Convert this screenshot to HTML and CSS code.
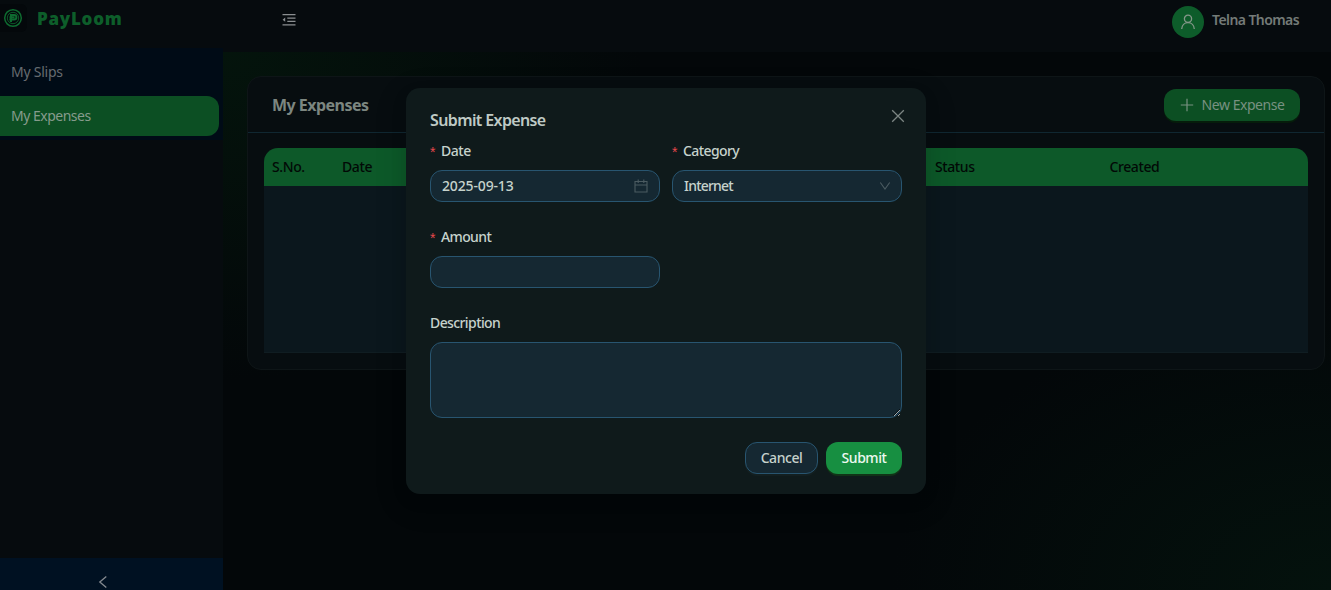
FILE: index.html
```html
<!DOCTYPE html>
<html lang="en">
<head>
<meta charset="utf-8">
<title>PayLoom</title>
<link rel="stylesheet" href="styles.css">
</head>
<body>
<div class="app">
  <aside class="sidebar">
    <div class="brand">
      <span class="logo">
        <svg width="20" height="20" viewBox="0 0 20 20" fill="none" stroke="currentColor"><circle cx="10" cy="10" r="8.3" stroke-width="1.5"/><circle cx="10" cy="10" r="5.700" stroke-width=".8"/><path d="M8 14V7h3.200a2 2 0 0 1 0 4.400H6.400M6.500 9.200h5" stroke-width="2"/></svg>
      </span>
      <span class="brand-name">PayLoom</span>
    </div>
    <nav class="menu">
      <a class="menu-item"><span class="t-slips">My Slips</span></a>
      <a class="menu-item active"><span class="t-menu">My Expenses</span></a>
    </nav>
    <div class="collapse">
      <svg width="10" height="14" viewBox="0 0 10 14" fill="none" stroke="currentColor" stroke-width="1.3"><path d="M8.3 1.5 1.8 7l6.5 5.5"/></svg>
    </div>
  </aside>
  <div class="main">
    <header class="topbar">
      <svg class="fold" width="14" height="14" viewBox="0 0 14 14" fill="currentColor"><path d="M.5 1h13v1.300H.5zM5.300 4.500h8.200v1.200H5.300zM5.300 7.700h8.200v1.200H5.300zM.5 11.200h13v1.300H.5zM.6 6.700l2.600-2.100v4.200z"/></svg>
      <div class="user">
        <span class="avatar"><svg width="16" height="16" viewBox="0 0 16 16" fill="none" stroke="currentColor" stroke-width="1.3"><circle cx="8" cy="4.8" r="3.6"/><path d="M1.700 15c.2-3.700 2.800-6.400 6.300-6.400s6.100 2.700 6.300 6.400"/></svg></span>
        <span class="user-name">Telna Thomas</span>
      </div>
    </header>
    <main class="content">
      <section class="card">
        <div class="card-head">
          <h1 class="card-title">My Expenses</h1>
          <button class="btn btn-new"><svg width="14" height="14" viewBox="0 0 14 14" stroke="currentColor" stroke-width="1.2"><path d="M7 .8v12.400M.8 7h12.400"/></svg><span class="t-new">New Expense</span></button>
        </div>
        <div class="card-body">
          <div class="table">
            <div class="thead"><span>S.No.</span><span>Date</span><span>Status</span><span>Created</span></div>
            <div class="tbody"></div>
          </div>
        </div>
      </section>
    </main>
  </div>
</div>
<div class="modal">
  <svg class="close" width="14" height="14" viewBox="0 0 14 14" stroke="currentColor" stroke-width="1.3"><path d="M1.200 1.200l11.600 11.600M12.800 1.200L1.200 12.800"/></svg>
  <h2 class="modal-title">Submit Expense</h2>
  <form class="form">
    <div class="field">
      <label class="label"><i class="req">*</i><span class="t-date">Date</span></label>
      <div class="control"><span class="t-value">2025-09-13</span>
        <svg class="cal" width="14" height="14" viewBox="0 0 14 14" fill="none" stroke="currentColor"><path d="M1 2.500h12v10.500H1zM1 6h12M4.200.5v3.500M9.800.5v3.500" stroke-width="1.100"/></svg>
      </div>
    </div>
    <div class="field">
      <label class="label"><i class="req">*</i><span class="t-category">Category</span></label>
      <div class="control"><span class="t-net">Internet</span>
        <svg class="chev" width="12" height="12" viewBox="0 0 12 12" fill="none" stroke="currentColor" stroke-width="1.100"><path d="M1.300 2.500 6 9l4.700-6.500"/></svg>
      </div>
    </div>
    <div class="field">
      <label class="label"><i class="req">*</i><span class="t-amount">Amount</span></label>
      <div class="control"></div>
    </div>
    <div class="field wide">
      <label class="label"><span class="t-desc">Description</span></label>
      <textarea class="control area"></textarea>
    </div>
  </form>
  <div class="actions">
    <button class="btn btn-cancel"><span>Cancel</span></button>
    <button class="btn btn-submit"><span>Submit</span></button>
  </div>
</div>
</body>
</html>
```

FILE: styles.css
```css
* { box-sizing: border-box; }
body { margin: 0; background: #030609; font: 14px/22px "Noto Sans", "Open Sans", sans-serif; letter-spacing: -.45px; overflow: hidden; }
h1, h2 { margin: 0; }
svg { display: block; flex: none; }
.app { display: flex; height: 590px; }
.sidebar { width: 223px; flex: none; display: flex; flex-direction: column; background: #060b0e; }
.brand { height: 48px; display: flex; align-items: flex-start; }
.logo { width: 27px; height: 28px; margin-top: 4px; padding: 4px 0 0 3px; border-radius: 0 6px 6px 0; background: #04080b; color: #0e6b30; }
.brand-name { margin: 7px 0 0 10px; font-size: 17px; line-height: 24px; font-weight: 900; letter-spacing: .75px; color: #0d5e2a; }
.menu { height: 92px; padding: 4px 4px 4px 0; background: #000b16; display: flex; flex-direction: column; gap: 4px; }
.menu-item { height: 40px; line-height: 40px; padding-left: 11px; color: #666b70; }
.t-slips { letter-spacing: -.25px; }
.t-menu { letter-spacing: -.5px; }
.menu-item.active { background: #0c4f23; color: #869b8c; border-radius: 0 12px 12px 0; }
.collapse { height: 32px; margin-top: auto; padding: 17px 0 0 98px; background: #001122; color: #858b91; overflow: hidden; }
.main { flex: 1; min-width: 0; display: flex; flex-direction: column; background: radial-gradient(420px 330px at 0 50px, #04140c 0, rgba(4,20,12,0) 100%), radial-gradient(440px 290px at 100% 100%, #04120d 0, rgba(4,18,13,0) 100%), #030709; }
.topbar { height: 52px; flex: none; display: flex; justify-content: space-between; background: #060b0e; padding: 0 32px 0 59px; }
.fold { margin-top: 13px; color: #8a8e90; }
.user { display: flex; gap: 8px; padding-top: 6px; height: 38px; }
.avatar { width: 32px; height: 32px; border-radius: 50%; background: #0d5c2a; color: #849789; display: grid; place-items: center; }
.user-name { width: 87px; white-space: nowrap; margin-top: 3px; font-weight: 600; color: #747b78; letter-spacing: -.58px; }
.content { padding: 24px 6px 0 24px; }
.card { height: 294px; border: 1px solid #0e1517; border-radius: 14px; background: #070d10; }
.card-head { height: 56px; border-bottom: 1px solid #102731; display: flex; justify-content: space-between; align-items: center; padding: 0 24px; }
.card-title { font-size: 16px; line-height: 24px; font-weight: 700; color: #7c8680; letter-spacing: -.52px; }
.card-body { padding: 15px 16px; }
.table { border-radius: 14px 14px 0 0; overflow: hidden; }
.thead { height: 38px; line-height: 38px; padding-left: 8px; background: #0d5929; color: #020906; display: grid; grid-template-columns: 70px 593px 174.500px 1fr; font-weight: 500; letter-spacing: -.4px; }
.tbody { height: 167px; background: #0b171d; border-bottom: 1px solid #101d22; }
.btn { height: 32px; border: 0; border-radius: 12px; font: inherit; letter-spacing: inherit; padding: 0; display: flex; align-items: center; justify-content: center; white-space: nowrap; }
.btn-new { width: 136px; gap: 8px; background: #0c4f23; color: #789181; box-shadow: 0 2px 0 #061c0b; }
.modal { position: absolute; left: 406px; top: 88px; width: 520px; height: 406px; border-radius: 14px; background: #0f1a1b; padding: 20px 24px; color: #c6d2cc; box-shadow: 0 6px 16px rgba(0,0,0,.1), 0 9px 28px 8px rgba(0,0,0,.08); }
.close { position: absolute; right: 21px; top: 21px; color: #7c8583; }
.modal-title { font-size: 16px; line-height: 25px; height: 24px; font-weight: 600; letter-spacing: -.62px; color: #bfcac5; }
.form { display: grid; grid-template-columns: 230px 230px; column-gap: 12px; row-gap: 24px; margin-top: 8px; }
.wide { grid-column: 1 / -1; }
.field { display: flex; flex-direction: column; gap: 8px; }
.label { display: flex; height: 22px; font-weight: 500; }
.t-category { letter-spacing: -.6px; }
.t-amount { letter-spacing: -.63px; }
.t-desc { letter-spacing: -.6px; }
.t-net { letter-spacing: -.8px; }
.t-value { letter-spacing: -.15px; }
.req { width: 11px; color: #e8484c; font: 14px/24px "Liberation Sans", sans-serif; }
.control { width: 100%; height: 32px; border: 1px solid #285570; border-radius: 12px; background: #152832; padding: 0 11px; display: flex; align-items: center; justify-content: space-between; font-weight: 500; }
.cal, .chev { color: #4b5b61; }
.chev { margin-right: -1px; }
.area { display: block; height: 76px; resize: vertical; outline: 0; }
.actions { margin-top: 24px; display: flex; justify-content: flex-end; gap: 8px; font-weight: 500; }
.btn-cancel { width: 73px; border: 1px solid #285570; background: #152832; color: #c6d2cc; box-shadow: 0 2px 0 #131f20; }
.btn-submit { width: 76px; background: #178f41; color: #edf8f0; box-shadow: 0 2px 0 #113317; }
```
